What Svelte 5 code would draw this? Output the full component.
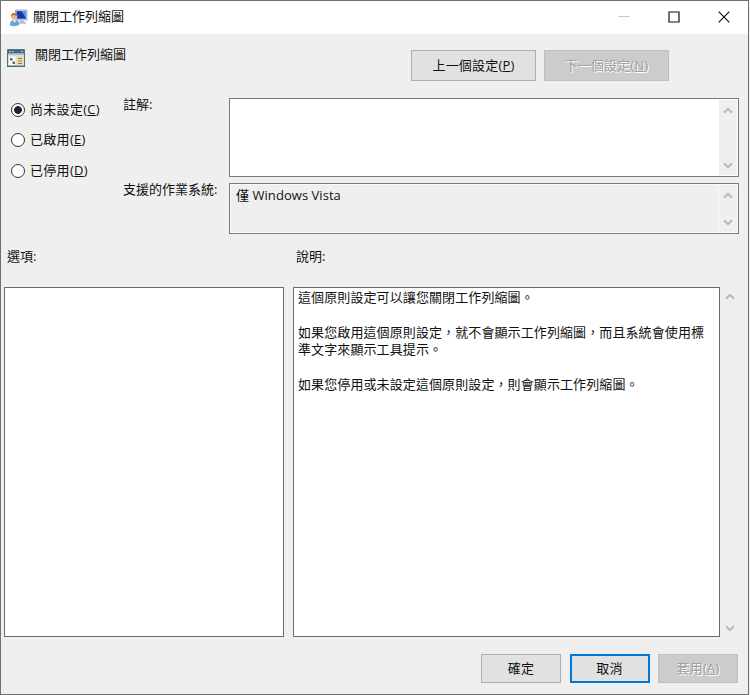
<script>
  let state = $state('none');
  let comment = $state('');

  const options = [
    { id: 'none', label: '尚未設定', key: 'C' },
    { id: 'enabled', label: '已啟用', key: 'E' },
    { id: 'disabled', label: '已停用', key: 'D' },
  ];

  const help = [
    '這個原則設定可以讓您關閉工作列縮圖。',
    '如果您啟用這個原則設定，就不會顯示工作列縮圖，而且系統會使用標準文字來顯示工具提示。',
    '如果您停用或未設定這個原則設定，則會顯示工作列縮圖。',
  ];
</script>

{#snippet scrollbar()}
  <div class="scrollbar">
    <svg width="10" height="7" viewBox="0 0 10 7"><path d="M1 5.800 5 1.800 9 5.800" /></svg>
    <svg width="10" height="7" viewBox="0 0 10 7"><path d="M1 1.200 5 5.200 9 1.200" /></svg>
  </div>
{/snippet}

<div class="window" lang="zh-TW">
  <header class="titlebar">
    <svg class="app-icon" width="19" height="18" viewBox="0 0 19 18">
      <path d="M6.500 1h11.500v10H6.500z" fill="#d5dbe4" stroke="#8e9bb0" stroke-width=".8" />
      <path d="M7.500 2.100h9.400v7.600H7.500z" fill="#1238b0" />
      <path d="M12.500 2.100h4.400v7.200z" fill="#5b95ee" />
      <path d="M11 11.400h3l1 1.600h2v1.800h-7z" fill="#b6bdc8" />
      <path d="M1 16.300c0-3.800 1.500-5.300 4.300-5.300s5 1.500 5 4.700c-2.600 1.700-6.600 1.900-9.300.6z" fill="#69a5cf" />
      <path d="m4 11 1.500 3 1.700-3z" fill="#eef4f8" />
      <circle cx="5.300" cy="7.700" r="3.100" fill="#e6b98c" />
      <path d="M2 7.700C1.600 4.500 4 3.600 6 4.200c1.700.3 2.600 1.700 2.400 3.200C6.500 7.200 5.500 6 4.800 6 3.600 6 3 6.800 2 7.700z" fill="#a77b43" />
    </svg>
    <span class="title">關閉工作列縮圖</span>
    <div class="controls">
      <svg width="12" height="12" viewBox="0 0 12 12"><path d="M.5 5.500h11" stroke="#c8c8c8" /></svg>
      <svg width="12" height="12" viewBox="0 0 12 12"><path d="M1 1h10v10H1z" stroke="#111" stroke-width="1.200" /></svg>
      <svg width="12" height="12" viewBox="0 0 12 12"><path d="m.7.7 10.600 10.600M11.300.7.7 11.300" stroke="#111" stroke-width="1.200" /></svg>
    </div>
  </header>

  <div class="setting">
    <svg width="18" height="18" viewBox="0 0 18 18">
      <path d="M.5.5h17v17H.5z" fill="#dfdccb" stroke="#57727c" />
      <path d="M1 1h16v3.500H1z" fill="#37698b" />
      <path d="M2 2.500h2M5 2.500h2M14 2.500h2" stroke="#e3ce75" stroke-width="1.200" />
      <path d="M1 4.500h16V6H1z" fill="#a7c3cd" />
      <path d="M2 7.500h6.500V16H2z" fill="#fff" />
      <path d="M10 7h6v9h-6z" fill="#efe0a1" />
      <path d="M3 9h2.500v2.500H3zM5.500 12.500H8V15H5.500z" fill="#5f6b68" />
      <path d="M11 9.500h4M11 12h4M11 14.500h4" stroke="#827a56" />
      <path d="M0 17.300h18" stroke="#3d7774" stroke-width="1.400" />
    </svg>
    <span class="name">關閉工作列縮圖</span>
    <div class="nav">
      <button>上一個設定(<u>P</u>)</button>
      <button disabled>下一個設定(<u>N</u>)</button>
    </div>
  </div>

  <div class="config">
    <div class="radios">
      {#each options as option}
        <label>
          <input type="radio" name="state" value={option.id} bind:group={state} />
          <span>{option.label}(<u>{option.key}</u>)</span>
        </label>
      {/each}
    </div>
    <div class="fields">
      <span class="caption">註解:</span>
      <div class="field comment">
        <textarea bind:value={comment}></textarea>
        {@render scrollbar()}
      </div>
      <span class="caption">支援的作業系統:</span>
      <div class="field supported">
        <div class="text">僅 Windows Vista</div>
        {@render scrollbar()}
      </div>
    </div>
  </div>

  <div class="panes">
    <span class="heading">選項:</span>
    <span class="heading">說明:</span>
    <div class="pane"></div>
    <div class="pane help">
      {#each help as paragraph}
        <p>{paragraph}</p>
      {/each}
    </div>
    {@render scrollbar()}
  </div>

  <footer>
    <button>確定</button>
    <button class="focused">取消</button>
    <button disabled>套用(<u>A</u>)</button>
  </footer>
</div>

<style>
  :global(body) {
    background: #efefef;
  }
  .window {
    box-sizing: border-box;
    display: flex;
    flex-direction: column;
    width: 749px;
    height: 695px;
    border: 1px solid #707070;
    background: #efefef;
    color: #111;
    font: 13px/17.4px "Open Sans", "Noto Sans CJK TC", sans-serif;
  }
  .titlebar {
    display: flex;
    align-items: center;
    height: 33px;
    flex: none;
    padding-left: 8px;
    background: #fff;
  }
  .title {
    margin: -2px 0 0 5px;
  }
  .controls {
    display: flex;
    gap: 38px;
    margin: -2px 0 0 auto;
    padding-right: 18px;
  }
  .controls svg {
    fill: none;
  }
  .setting {
    display: flex;
    height: 64px;
    flex: none;
    padding-left: 6px;
  }
  .setting > svg {
    margin-top: 15px;
  }
  .name {
    margin: 12px 0 0 10px;
  }
  .nav {
    display: flex;
    gap: 8px;
    margin: 16px 79px 0 auto;
  }
  button {
    box-sizing: border-box;
    padding: 0;
    border: 1px solid #adadad;
    background: #e1e1e1;
    color: #111;
    font: inherit;
    letter-spacing: 0.2px;
  }
  button:disabled {
    border-color: #bfbfbf;
    background: #ccc;
    color: #a0a0a0;
    text-shadow: 1px 1px #fff;
  }
  button.focused {
    border: 2px solid #0078d7;
  }
  u {
    text-underline-offset: 1px;
  }
  .nav button {
    width: 125px;
    height: 31px;
  }
  .config {
    display: flex;
    height: 136px;
    flex: none;
  }
  .radios {
    display: flex;
    flex-direction: column;
    gap: 13px;
    width: 122px;
    padding: 3px 0 0 10px;
    box-sizing: border-box;
    letter-spacing: 0.3px;
  }
  label {
    display: flex;
    align-items: center;
    gap: 5px;
  }
  input {
    appearance: none;
    box-sizing: border-box;
    width: 14px;
    height: 14px;
    margin: 0;
    border: 1px solid #333;
    border-radius: 50%;
    background: #fff;
  }
  input:checked {
    background: radial-gradient(circle, #222 3.5px, #fff 4.2px);
  }
  .fields {
    display: grid;
    grid-template-columns: 106px 510px;
    grid-template-rows: 79px 51px;
    row-gap: 6px;
    align-items: start;
  }
  .caption {
    margin-top: -2px;
  }
  .field {
    display: flex;
    box-sizing: border-box;
    height: 100%;
    padding: 1px;
    border: 1px solid #7a7a7a;
    background: #fff;
  }
  textarea {
    flex: 1;
    padding: 3px 5px;
    border: 0;
    outline: none;
    resize: none;
    font: inherit;
  }
  .supported {
    background: #efefef;
    box-shadow: inset 0 0 0 1px #fafafa;
  }
  .text {
    flex: 1;
    padding: 2px 5px;
    border-right: 1px solid #fafafa;
    letter-spacing: 0.05px;
  }
  .scrollbar {
    display: flex;
    flex-direction: column;
    justify-content: space-between;
    align-items: center;
    box-sizing: border-box;
    width: 18px;
    padding: 7px 0 6px;
    background: #efefef;
  }
  .scrollbar path {
    fill: none;
    stroke: #b8b8b8;
    stroke-width: 2;
  }
  .panes {
    display: grid;
    grid-template-columns: 280px 427px 18px;
    grid-template-rows: 39px 350px;
    column-gap: 9px;
    margin: 14px 0 0 3px;
  }
  .heading {
    padding-left: 3px;
  }
  .pane {
    grid-row: 2;
    box-sizing: border-box;
    border: 1px solid #6b6b6b;
    background: #fff;
  }
  .help {
    padding: 1px 10px 0 4px;
    letter-spacing: 0.1px;
  }
  .help p {
    margin: 0 0 17.4px;
  }
  .panes .scrollbar {
    grid-row: 2;
    margin-left: -8px;
    padding: 6px 0 5px;
  }
  footer {
    display: flex;
    justify-content: flex-end;
    gap: 8.5px;
    margin: 17px 10px 0 0;
  }
  footer button {
    width: 80px;
    height: 29px;
  }
</style>
